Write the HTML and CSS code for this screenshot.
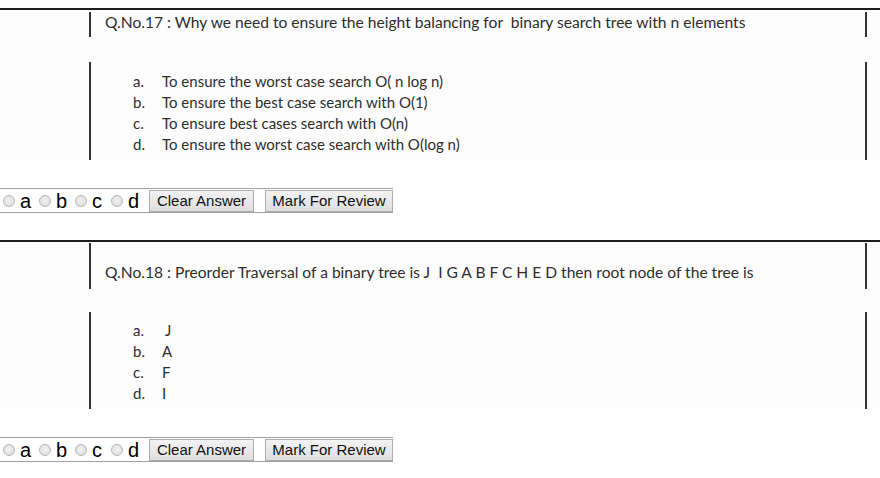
FILE: index.html
```html
<!DOCTYPE html>
<html>
<head>
<meta charset="utf-8">
<link rel="stylesheet" href="styles.css">
</head>
<body>
<div class="page">
  <div class="question q1">
    <div class="scan">
      <div class="qhead"><span>Q.No.17 : Why we need to ensure the height balancing for&nbsp; binary search tree with n elements</span></div>
      <div class="qopts">
        <div class="item"><span class="mk">a.</span><span>To ensure the worst case search O( n log n)</span></div>
        <div class="item"><span class="mk">b.</span><span>To ensure the best case search with O(1)</span></div>
        <div class="item"><span class="mk">c.</span><span>To ensure best cases search with O(n)</span></div>
        <div class="item"><span class="mk">d.</span><span>To ensure the worst case search with O(log n)</span></div>
      </div>
    </div>
    <div class="answer">
      <label class="opt"><input type="radio" name="q17"><span>a</span></label>
      <label class="opt"><input type="radio" name="q17"><span>b</span></label>
      <label class="opt"><input type="radio" name="q17"><span>c</span></label>
      <label class="opt"><input type="radio" name="q17"><span>d</span></label>
      <button class="btn btn-clear">Clear Answer</button>
      <button class="btn btn-mark">Mark For Review</button>
    </div>
  </div>
  <div class="question q2">
    <div class="scan">
      <div class="qhead"><span>Q.No.18 : Preorder Traversal of a binary tree is J&nbsp; I G A B F C H E D then root node of the tree is</span></div>
      <div class="qopts">
        <div class="item"><span class="mk">a.</span><span class="ind">J</span></div>
        <div class="item"><span class="mk">b.</span><span>A</span></div>
        <div class="item"><span class="mk">c.</span><span>F</span></div>
        <div class="item"><span class="mk">d.</span><span>I</span></div>
      </div>
    </div>
    <div class="answer">
      <label class="opt"><input type="radio" name="q18"><span>a</span></label>
      <label class="opt"><input type="radio" name="q18"><span>b</span></label>
      <label class="opt"><input type="radio" name="q18"><span>c</span></label>
      <label class="opt"><input type="radio" name="q18"><span>d</span></label>
      <button class="btn btn-clear">Clear Answer</button>
      <button class="btn btn-mark">Mark For Review</button>
    </div>
  </div>
</div>
</body>
</html>
```
FILE: styles.css
```css
html, body {
  margin: 0;
  padding: 0;
  background: #fff;
  font-family: "Liberation Sans", Arial, sans-serif;
}
.page {
  padding-top: 8px;
}
.question {
  border-top: 2px solid #1e1e1e;
}
.scan {
  background: #fdfdfd;
  font-family: Lato, "Open Sans", sans-serif;
  color: #2e2e2e;
}
.qhead {
  box-sizing: border-box;
  margin-left: 89px;
  width: 778px;
  border-left: 2px solid #333;
  border-right: 2px solid #333;
  padding-left: 14px;
  font-size: 15.6px;
  line-height: 20px;
  white-space: pre;
}
.q1 .qhead {
  margin-top: 2px;
  height: 25px;
}
.q2 .qhead {
  margin-top: 1px;
  height: 46px;
  padding-top: 19px;
}
.qopts {
  box-sizing: border-box;
  margin-left: 89px;
  width: 778px;
  border-left: 2px solid #333;
  border-right: 2px solid #333;
  padding-left: 42px;
  font-size: 15px;
}
.q1 .qopts {
  margin-top: 25px;
  padding-top: 9px;
  padding-bottom: 5px;
}
.q2 .qopts {
  margin-top: 23px;
  padding-top: 8px;
  padding-bottom: 5px;
}
.item {
  display: flex;
  line-height: 21px;
  height: 21px;
}
.mk {
  width: 29px;
}
.ind {
  padding-left: 3px;
}
.answer {
  box-sizing: border-box;
  display: flex;
  align-items: center;
  width: 393px;
  height: 25px;
  margin-top: 28px;
  margin-bottom: 27px;
  padding-left: 3px;
  border-top: 1px solid #a0a0a0;
  border-bottom: 1px solid #a0a0a0;
}
.opt {
  display: flex;
  align-items: center;
  width: 36px;
  font-size: 20px;
  color: #000;
  line-height: 22px;
}
.opt input {
  -webkit-appearance: none;
  appearance: none;
  margin: 0;
  width: 12px;
  height: 12px;
  border-radius: 50%;
  border: 1px solid #b4b4b4;
  background: radial-gradient(circle at 50% 45%, #f0f0f0 0%, #dcdcdc 100%);
  box-sizing: border-box;
}
.opt span {
  margin-left: 5px;
}
.btn {
  box-sizing: border-box;
  height: 22px;
  padding: 0;
  font-family: "Liberation Sans", Arial, sans-serif;
  font-size: 15px;
  color: #111;
  border: 1px solid #adadad;
  border-radius: 0;
  background: linear-gradient(#f3f3f3, #dedede);
}
.btn-clear {
  margin-left: 2px;
  width: 105px;
}
.btn-mark {
  margin-left: 11px;
  width: 128px;
}
```
